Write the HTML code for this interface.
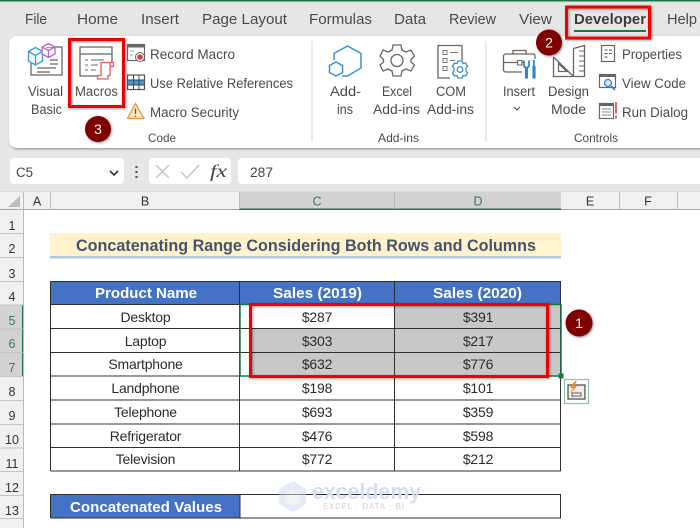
<!DOCTYPE html>
<html>
<head>
<meta charset="utf-8">
<style>
html,body{margin:0;padding:0;background:#fff;width:700px;height:528px;overflow:hidden}
svg{display:block;filter:blur(.35px)}
text{font-family:"Liberation Sans",sans-serif;fill:#444}
.t{font-size:14.5px;fill:#4a4a4a}
.r{font-size:13.5px;fill:#4a4a4a}
.g{font-size:12px;fill:#4a4a4a}
.h{font-size:12.5px;fill:#333;text-anchor:middle}
.c{font-size:14px;fill:#2b2b2b;text-anchor:middle;letter-spacing:-.2px}
.w{font-size:15px;font-weight:bold;fill:#fff}
.i{fill:none;stroke:#666;stroke-width:1.3}
.b{fill:none;stroke:#3f9bd8;stroke-width:1.5}
.num{font-size:14px;fill:#fff;text-anchor:middle}
</style>
</head>
<body>
<svg width="700" height="528" viewBox="0 0 700 528" xmlns="http://www.w3.org/2000/svg">
<defs>
<filter id="s" x="-10%" y="-10%" width="120%" height="120%"><feDropShadow dx="1" dy="1" stdDeviation="1.2" flood-color="#000" flood-opacity=".4"/></filter>
</defs>

<!-- chrome -->
<rect width="700" height="192" fill="#e6e6e6"/>
<rect width="700" height="1.500" fill="#217346"/>
<rect x="9" y="36" width="720" height="112" rx="8" fill="#fff" filter="url(#s)"/>

<!-- tabs -->
<text class="t" x="25" y="24" textLength="22" lengthAdjust="spacingAndGlyphs">File</text>
<text class="t" x="77" y="24" textLength="41" lengthAdjust="spacingAndGlyphs">Home</text>
<text class="t" x="141" y="24" textLength="38" lengthAdjust="spacingAndGlyphs">Insert</text>
<text class="t" x="202" y="24" textLength="85" lengthAdjust="spacingAndGlyphs">Page Layout</text>
<text class="t" x="309" y="24" textLength="63" lengthAdjust="spacingAndGlyphs">Formulas</text>
<text class="t" x="394" y="24" textLength="32" lengthAdjust="spacingAndGlyphs">Data</text>
<text class="t" x="449" y="24" textLength="47" lengthAdjust="spacingAndGlyphs">Review</text>
<text class="t" x="519" y="24" textLength="33" lengthAdjust="spacingAndGlyphs">View</text>
<text class="t" x="574" y="24" textLength="72" lengthAdjust="spacingAndGlyphs" style="font-weight:bold;fill:#3c3c3c">Developer</text>
<text class="t" x="667" y="24" textLength="30" lengthAdjust="spacingAndGlyphs">Help</text>
<rect x="574" y="30" width="72" height="2" fill="#217346"/>

<!-- Visual Basic icon -->
<path class="i" d="M46 47H62V75H31V62M37 68H56M37 72H50M50 60H58M50 64H58"/>
<path d="M28.500 51.500L35.500 47.500L42.500 51.500V61L35.500 65L28.500 61ZM28.500 51.500L35.500 55.500L42.500 51.500M35.500 55.500V65" fill="#fff" stroke="#3f9bd8" stroke-width="1.400"/>
<path d="M42 47L48.500 43.500L55 47V54L48.500 57.500L42 54ZM42 47L48.500 50.500L55 47M48.500 50.500V57.500" fill="#fff" stroke="#b565c9" stroke-width="1.300"/>
<text class="r" x="28" y="96" textLength="35" lengthAdjust="spacingAndGlyphs">Visual</text>
<text class="r" x="31" y="114" textLength="31" lengthAdjust="spacingAndGlyphs">Basic</text>

<!-- Macros icon -->
<path class="i" d="M97 76H80V47H112V62M80 54H112"/>
<path d="M85 60H88M91 60H104M85 65H88M91 65H98M85 70H88M91 70H96" stroke="#888" stroke-width="1.200" fill="none"/>
<path d="M101 62.500H113.500V66.500H110V75.500H108V79H97.500V75.500H101ZM110 62.500V66.500" fill="#fff" stroke="#ee5a5a" stroke-width="1.300"/>
<text class="r" x="75" y="96" textLength="43" lengthAdjust="spacingAndGlyphs">Macros</text>

<!-- Record macro -->
<rect x="127.500" y="44.500" width="17" height="16" fill="#fff" stroke="#666" stroke-width="1.200"/>
<rect x="127.500" y="44.500" width="17" height="3" fill="#666"/>
<path d="M130 51H134M130 55H133" stroke="#999"/>
<circle cx="140" cy="57" r="4.500" fill="#fff" stroke="#666"/>
<circle cx="140" cy="57" r="2.800" fill="#e0394a"/>
<text class="r" x="150" y="59" textLength="85" lengthAdjust="spacingAndGlyphs">Record Macro</text>

<!-- Relative refs -->
<rect x="127.500" y="75" width="17" height="14.500" fill="#fff" stroke="#555" stroke-width="1.200"/>
<rect x="128" y="80" width="16" height="5" fill="#3f9bd8"/>
<path d="M133.500 75V89.500M139 75V89.500M127.500 80H144.500M127.500 85H144.500" stroke="#444" fill="none"/>
<text class="r" x="150" y="88" textLength="143" lengthAdjust="spacingAndGlyphs">Use Relative References</text>

<!-- Warning -->
<path d="M135.500 103.500L144 118.500H127.500Z" fill="#fbe6c2" stroke="#e89a3c" stroke-width="1.300"/>
<path d="M135.500 108.500V114M135.500 115.500V117" stroke="#7a5b2e" stroke-width="1.300"/>
<text class="r" x="150" y="117" textLength="89" lengthAdjust="spacingAndGlyphs">Macro Security</text>
<text class="g" x="148" y="142" textLength="28" lengthAdjust="spacingAndGlyphs">Code</text>

<rect x="311.500" y="41" width="1" height="101" fill="#d6d6d6"/>
<rect x="485.500" y="41" width="1" height="101" fill="#d6d6d6"/>

<!-- Add-ins -->
<path d="M334 60V53.500L347.500 46L361 53.500V68L347.500 76H342" fill="none" stroke="#3f8fd8" stroke-width="1.500"/>
<path d="M336 62L342.500 65.500V72.500L336 76L329.500 72.500V65.500Z" fill="#fff" stroke="#3f8fd8" stroke-width="1.500"/>
<text class="r" x="330" y="96" textLength="31" lengthAdjust="spacingAndGlyphs">Add-</text>
<text class="r" x="337" y="114" textLength="16" lengthAdjust="spacingAndGlyphs">ins</text>

<!-- Excel Add-ins gear -->
<path class="i" d="M393 45H401L402 50L406 52L411 50L414.500 56L411 59.500V62L414.500 65L411 71L406 69L402 71L401 76H393L392 71L388 69L383 71L380 65L383.500 62V59.500L380 56L383 50L388 52L392 50Z"/>
<circle class="i" cx="397" cy="60.500" r="6"/>
<text class="r" x="382" y="96" textLength="30" lengthAdjust="spacingAndGlyphs">Excel</text>
<text class="r" x="373" y="114" textLength="47" lengthAdjust="spacingAndGlyphs">Add-ins</text>

<!-- COM Add-ins -->
<path class="i" d="M450 78H438V45.500H462V60"/>
<path d="M443 50.500H447V54.500H443ZM443 58.500H447V62.500H443ZM443 66.500H447V70.500H443ZM450 52.500H458M450 60.500H455" stroke="#777" fill="none"/>
<path d="M458 61H462L463 63.500L465.500 63L467.500 66L466 68V71L467.500 73L465.500 76L463 75.500L462 78H458L457 75.500L454.500 76L452.500 73L454 71V68L452.500 66L454.500 63L457 63.500Z" fill="#fff" stroke="#3f8fd8" stroke-width="1.300"/>
<circle cx="460" cy="69.500" r="2.800" fill="none" stroke="#3f8fd8" stroke-width="1.300"/>
<text class="r" x="436" y="96" textLength="30" lengthAdjust="spacingAndGlyphs">COM</text>
<text class="r" x="427" y="114" textLength="47" lengthAdjust="spacingAndGlyphs">Add-ins</text>
<text class="g" x="378" y="142" textLength="41" lengthAdjust="spacingAndGlyphs">Add-ins</text>

<!-- Insert toolbox -->
<path class="i" d="M522 72H506C504.500 72 503.500 71 503.500 70V56C503.500 55 504.500 54 506 54H533C534.500 54 535 55 535 56V59M513 54V50.500H526V54M503.500 62.500H517M522 62.500H524"/>
<rect x="517.500" y="60.500" width="4.500" height="4.500" fill="#fff" stroke="#666"/>
<path d="M524 60.500V65.500C524 67 525 67.500 526.500 67.500C528 67.500 529 67 529 65.500V60.500" fill="none" stroke="#2e86cf" stroke-width="1.800"/>
<path d="M526.500 67V78.500" stroke="#2e86cf" stroke-width="3"/>
<path d="M534 60V66" stroke="#2e86cf" stroke-width="1.800"/>
<path d="M534 66V78.500" stroke="#2e86cf" stroke-width="3.200"/>
<text class="r" x="503" y="96" textLength="32" lengthAdjust="spacingAndGlyphs">Insert</text>
<path d="M514 107L517 110L520 107" fill="none" stroke="#555" stroke-width="1.200"/>

<!-- Design Mode -->
<path class="i" d="M553.500 57V76.500H584.500V45.500L573.500 48.500V76.500M553.500 57L573.500 76.500M558.500 63.500V71.500H567L558.500 63.500Z"/>
<path d="M579 51H584M579 56H584M579 61H584M579 66H584M579 71H584" stroke="#666" fill="none"/>
<text class="r" x="548" y="96" textLength="41" lengthAdjust="spacingAndGlyphs">Design</text>
<text class="r" x="551" y="114" textLength="35" lengthAdjust="spacingAndGlyphs">Mode</text>

<!-- Controls right col -->
<rect x="601.500" y="45.500" width="13" height="16" fill="#fff" stroke="#666" stroke-width="1.200"/>
<path d="M604.500 50H607.500M609 50H612M604.500 53.500H607.500M609 53.500H612M604.500 57H607.500" stroke="#555" fill="none"/>
<text class="r" x="622" y="59" textLength="60" lengthAdjust="spacingAndGlyphs">Properties</text>

<rect x="599.500" y="74.500" width="16" height="13" fill="#fff" stroke="#666" stroke-width="1.200"/>
<rect x="599.500" y="74.500" width="16" height="2.500" fill="#666"/>
<circle cx="608" cy="83" r="3.500" fill="#d8ecfa" stroke="#2e86cf" stroke-width="1.300"/>
<path d="M611 86L615 90" stroke="#2e86cf" stroke-width="1.800"/>
<text class="r" x="622" y="88" textLength="64" lengthAdjust="spacingAndGlyphs">View Code</text>

<rect x="599.500" y="103.500" width="14" height="15" fill="#fff" stroke="#666" stroke-width="1.200"/>
<rect x="599.500" y="103.500" width="14" height="2.500" fill="#666"/>
<path d="M602 109H611M602 112H611M602 115H611" stroke="#888" fill="none"/>
<path d="M616 102V113.500M616 115.500V118.500" stroke="#e0394a" stroke-width="1.600"/>
<text class="r" x="622" y="117" textLength="66" lengthAdjust="spacingAndGlyphs">Run Dialog</text>
<text class="g" x="574" y="142" textLength="44" lengthAdjust="spacingAndGlyphs">Controls</text>

<!-- formula bar -->
<rect x="10" y="158" width="114" height="26" rx="4" fill="#fff"/>
<text x="16" y="177" style="font-size:13.500px;fill:#444" textLength="17" lengthAdjust="spacingAndGlyphs">C5</text>
<path d="M110 171L114 175L118 171" fill="none" stroke="#333" stroke-width="1.600"/>
<path d="M136.500 166V168M136.500 171V173M136.500 176V178" stroke="#555" stroke-width="2.200"/>
<rect x="149" y="158" width="82" height="26" rx="4" fill="#fff"/>
<path d="M156 165L169 178M169 165L156 178" stroke="#c4c4c4" stroke-width="1.400" fill="none"/>
<path d="M181 172L187 178L199 165" stroke="#c4c4c4" stroke-width="1.400" fill="none"/>
<text x="210" y="177" style="font-family:'Liberation Serif',serif;font-style:italic;font-size:18px;fill:#444" textLength="17" lengthAdjust="spacingAndGlyphs">fx</text>
<rect x="238" y="158" width="470" height="26" rx="4" fill="#fff"/>
<text x="250" y="177" style="font-size:13.500px;fill:#444" textLength="23" lengthAdjust="spacingAndGlyphs">287</text>

<!-- column headers -->
<rect x="0" y="192" width="700" height="18" fill="#f0f0f0"/>
<rect x="0" y="191" width="700" height="1" fill="#dcdcdc"/>
<path d="M20 196V207H8Z" fill="#bdbdbd"/>
<rect x="239" y="192" width="322" height="18" fill="#d2d2d2"/>
<rect x="239" y="208.500" width="322" height="1.500" fill="#217346"/>
<rect x="0" y="209" width="239" height="1" fill="#a8a8a8"/>
<rect x="561" y="209" width="139" height="1" fill="#a8a8a8"/>
<path d="M23.500 192V210M50.500 192V210M239.500 192V209M394.500 192V209M619.500 192V210M677.500 192V210" stroke="#bdbdbd"/>
<text class="h" x="37" y="205.500">A</text>
<text class="h" x="145" y="205.500">B</text>
<text class="h" x="317" y="205.500" style="fill:#3d7a58">C</text>
<text class="h" x="478" y="205.500" style="fill:#3d7a58">D</text>
<text class="h" x="590" y="205.500">E</text>
<text class="h" x="648" y="205.500">F</text>

<!-- row headers -->
<rect x="0" y="210" width="23.500" height="318" fill="#f0f0f0"/>
<rect x="0" y="305" width="23" height="71" fill="#d2d2d2"/>
<rect x="22" y="305" width="1.500" height="71" fill="#217346"/>
<rect x="23" y="210" width="1" height="318" fill="#bdbdbd"/>
<path d="M0 233.500H23M0 257.500H23M0 281.500H23M0 305H23M0 329H23M0 352.500H23M0 376.500H23M0 400.500H23M0 424.500H23M0 448H23M0 471.500H23M0 495.500H23M0 518.500H23" stroke="#c4c4c4"/>
<text class="h" x="12" y="230">1</text>
<text class="h" x="12" y="253">2</text>
<text class="h" x="12" y="278">3</text>
<text class="h" x="12" y="301">4</text>
<text class="h" x="12" y="325" style="fill:#3d7a58">5</text>
<text class="h" x="12" y="348" style="fill:#3d7a58">6</text>
<text class="h" x="12" y="372" style="fill:#3d7a58">7</text>
<text class="h" x="12" y="396">8</text>
<text class="h" x="12" y="420">9</text>
<text class="h" x="12" y="444">10</text>
<text class="h" x="12" y="468">11</text>
<text class="h" x="12" y="492">12</text>
<text class="h" x="12" y="515">13</text>

<!-- title -->
<rect x="50" y="233" width="511" height="23" fill="#fff2cc"/>
<rect x="50" y="256" width="511" height="2.500" fill="#b4c6e7"/>
<text x="76" y="251" textLength="460" lengthAdjust="spacingAndGlyphs" style="font-size:16.500px;font-weight:bold;fill:#44546a">Concatenating Range Considering Both Rows and Columns</text>

<!-- table -->
<rect x="50.500" y="281" width="510" height="24" fill="#4472c4"/>
<rect x="250" y="329" width="311" height="47" fill="#c8c8c8"/>
<rect x="394" y="305" width="167" height="24" fill="#c8c8c8"/>
<path d="M50.500 281.500H560.500M50.500 304.500H560.500M50.500 328.500H560.500M50.500 352.500H560.500M50.500 376H560.500M50.500 400H560.500M50.500 424H560.500M50.500 447.500H560.500M50.500 471H560.500M50.500 281V471M239.500 281V471M394.500 281V471M560.500 281V471" stroke="#2f2f2f" fill="none"/>
<text class="w" x="95" y="298" textLength="102" lengthAdjust="spacingAndGlyphs">Product Name</text>
<text class="w" x="273" y="298" textLength="89" lengthAdjust="spacingAndGlyphs">Sales (2019)</text>
<text class="w" x="433" y="298" textLength="89" lengthAdjust="spacingAndGlyphs">Sales (2020)</text>

<text class="c" x="145.500" y="322">Desktop</text><text class="c" x="317" y="322">$287</text><text class="c" x="478" y="322">$391</text>
<text class="c" x="145.500" y="346">Laptop</text><text class="c" x="317" y="346">$303</text><text class="c" x="478" y="346">$217</text>
<text class="c" x="145.500" y="369">Smartphone</text><text class="c" x="317" y="369">$632</text><text class="c" x="478" y="369">$776</text>
<text class="c" x="145.500" y="393">Landphone</text><text class="c" x="317" y="393">$198</text><text class="c" x="478" y="393">$101</text>
<text class="c" x="145.500" y="417">Telephone</text><text class="c" x="317" y="417">$693</text><text class="c" x="478" y="417">$359</text>
<text class="c" x="145.500" y="441">Refrigerator</text><text class="c" x="317" y="441">$476</text><text class="c" x="478" y="441">$598</text>
<text class="c" x="145.500" y="464">Television</text><text class="c" x="317" y="464">$772</text><text class="c" x="478" y="464">$212</text>

<!-- concat row -->
<rect x="50.500" y="495" width="189" height="23" fill="#4472c4"/>
<path d="M50.500 494.500H561M50.500 518H561M50.500 494.500V518M240 494.500V518M560.500 494.500V518" stroke="#2f2f2f" fill="none"/>
<text class="w" x="70" y="512" textLength="152" lengthAdjust="spacingAndGlyphs">Concatenated Values</text>

<!-- watermark -->
<g opacity=".5">
<path d="M293 481L306 489V504L293 512L279 504V489Z" fill="#c9d6f2"/>
<path d="M293 490L300 494V502L293 506L286 502V494Z" fill="#e8e8e8"/>
</g>
<text x="312" y="499" textLength="109" lengthAdjust="spacingAndGlyphs" style="font-size:22px;font-weight:bold;fill:#d4def5">exceldemy</text>
<text x="323" y="509" textLength="82" lengthAdjust="spacingAndGlyphs" style="font-size:8px;font-weight:bold;fill:#dcdcdc;letter-spacing:1px">EXCEL · DATA · BI</text>

<!-- selection -->
<rect x="240" y="304.500" width="321" height="71.500" fill="none" stroke="#217346" stroke-width="1.500"/>
<rect x="558.500" y="373.500" width="5" height="5" fill="#217346"/>

<!-- quick analysis -->
<rect x="564.500" y="379.500" width="24" height="24" fill="#fff" stroke="#8fc1a5" stroke-width="1.200"/>
<rect x="568" y="385" width="17" height="14" fill="#eee" stroke="#555" stroke-width="1.300"/>
<rect x="572" y="393" width="9" height="3" fill="#fff" stroke="#555"/>
<path d="M575 381L570 388H573L570 394L577 386H574L577 381Z" fill="#ee8c2c"/>

<!-- red boxes -->
<g fill="none" stroke="#f00000" stroke-width="3" filter="url(#s)">
<rect x="250.500" y="304.500" width="297" height="72"/>
<rect x="69.500" y="39.500" width="54" height="67"/>
<rect x="566.500" y="7" width="83" height="31"/>
</g>

<!-- circles -->
<g filter="url(#s)" fill="#800000">
<circle cx="579" cy="323" r="13.500"/>
<circle cx="549" cy="42.500" r="13"/>
<circle cx="98" cy="129" r="13"/>
</g>
<text class="num" x="579" y="328">1</text>
<text class="num" x="549" y="47.500">2</text>
<text class="num" x="98" y="134">3</text>
</svg>
</body>
</html>
